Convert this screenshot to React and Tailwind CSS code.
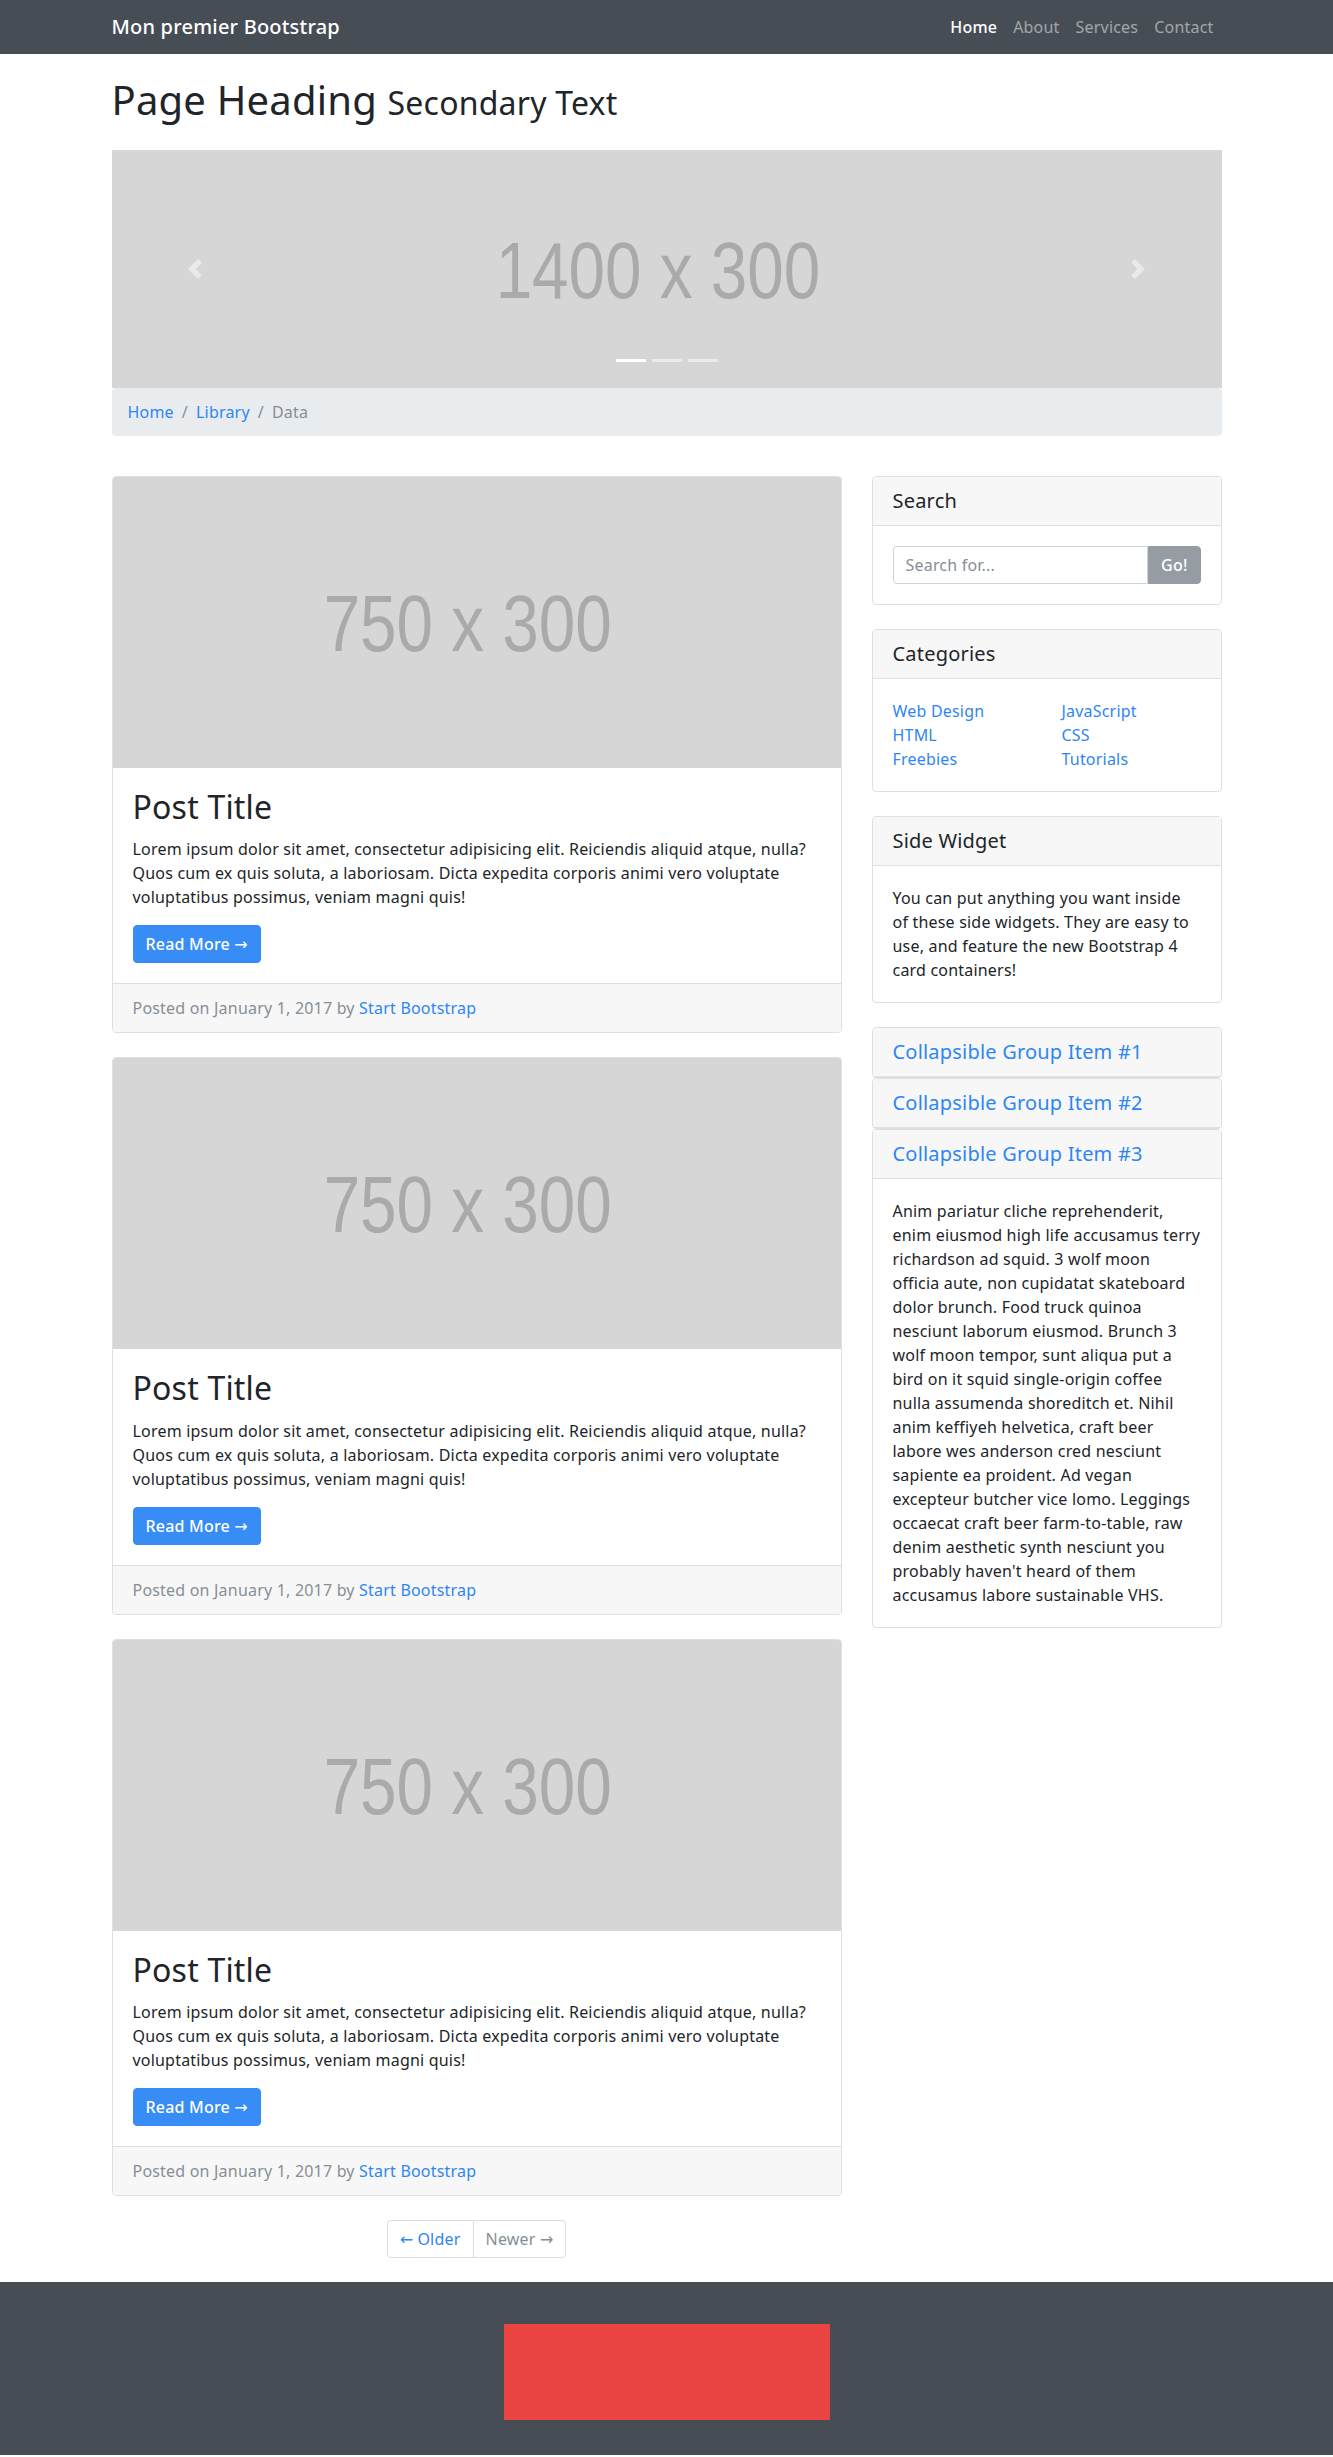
import React from 'react';

const navLinks = ['Home', 'About', 'Services', 'Contact'];

const categories = [
  ['Web Design', 'HTML', 'Freebies'],
  ['JavaScript', 'CSS', 'Tutorials'],
];

const widgetLines = [
  'You can put anything you want inside',
  'of these side widgets. They are easy to',
  'use, and feature the new Bootstrap 4',
  'card containers!',
];

const accordionLines = [
  'Anim pariatur cliche reprehenderit,',
  'enim eiusmod high life accusamus terry',
  'richardson ad squid. 3 wolf moon',
  'officia aute, non cupidatat skateboard',
  'dolor brunch. Food truck quinoa',
  'nesciunt laborum eiusmod. Brunch 3',
  'wolf moon tempor, sunt aliqua put a',
  'bird on it squid single-origin coffee',
  'nulla assumenda shoreditch et. Nihil',
  'anim keffiyeh helvetica, craft beer',
  'labore wes anderson cred nesciunt',
  'sapiente ea proident. Ad vegan',
  'excepteur butcher vice lomo. Leggings',
  'occaecat craft beer farm-to-table, raw',
  'denim aesthetic synth nesciunt you',
  "probably haven't heard of them",
  'accusamus labore sustainable VHS.',
];

// arrows look bigger in the original, DejaVu has a wider one
const Arrow = ({ left }) => (
  <span className="font-['DejaVu_Sans',sans-serif] leading-none tracking-normal">{left ? '\u2190' : '\u2192'}</span>
);

const Placeholder = ({ label, className }) => (
  <div className={`flex items-center justify-center bg-[#d6d6d6] ${className}`}>
    <span className="mr-[18px] mt-[3px] block scale-x-[0.82] font-['Liberation_Sans',Arial,sans-serif] text-[80px] leading-none tracking-normal text-[#aaaaaa]">
      {label}
    </span>
  </div>
);

const Chevron = ({ flip }) => (
  <svg width="20" height="20" viewBox="0 0 8 8" fill="#fff" className={flip ? 'rotate-180' : ''}>
    <path d="M5.25 0l-4 4 4 4 1.5-1.5-2.5-2.5 2.5-2.5-1.5-1.5z" />
  </svg>
);

const SideCard = ({ title, children }) => (
  <div className="mb-6 rounded-[4px] border border-[#dfdfdf]">
    <h5 className="rounded-t-[3px] border-b border-[#dfdfdf] bg-[#f7f7f7] px-5 py-3 text-[20px] leading-6">{title}</h5>
    <div className="p-5">{children}</div>
  </div>
);

const Post = () => (
  <div className="mb-6 overflow-hidden rounded-[4px] border border-[#dfdfdf]">
    <Placeholder label="750 x 300" className="h-[291px]" />
    <div className="p-5">
      <h2 className="mb-[11px] text-[32px] leading-[1.2]">Post Title</h2>
      <p className="mb-4">
        Lorem ipsum dolor sit amet, consectetur adipisicing elit. Reiciendis aliquid atque, nulla? Quos cum ex quis
        soluta, a laboriosam. Dicta expedita corporis animi vero voluptate voluptatibus possimus, veniam magni quis!
      </p>
      <a href="#" className="inline-block rounded-[4px] border border-[#378cf6] bg-[#378cf6] px-3 py-1.5 font-medium text-white">
        Read More <Arrow />
      </a>
    </div>
    <div className="border-t border-[#dfdfdf] bg-[#f7f7f7] px-5 py-3 text-[#868e96]">
      Posted on January 1, 2017 by{' '}
      <a href="#" className="text-[#2e86f5]">
        Start Bootstrap
      </a>
    </div>
  </div>
);

export default function App() {
  return (
    <div className="min-h-screen bg-white font-['Noto_Sans',sans-serif] text-[16px] leading-6 tracking-[0.2px] text-[#212529]">
      <nav className="bg-[#474d55]">
        <div className="mx-auto flex h-[54px] max-w-[1140px] items-center justify-between px-[15px]">
          <a href="#" className="text-[20px] font-medium text-white">
            Mon premier Bootstrap
          </a>
          <ul className="flex">
            {navLinks.map((link, i) => (
              <li key={link}>
                <a href="#" className={`block px-2 ${i === 0 ? 'font-medium text-white' : 'text-white/50'}`}>
                  {link}
                </a>
              </li>
            ))}
          </ul>
        </div>
      </nav>

      <div className="mx-auto max-w-[1140px] px-[15px]">
        <h1 className="mb-[26px] mt-[22px] text-[40px] leading-[1.2]">
          Page Heading <small className="text-[32px]">Secondary Text</small>
        </h1>

        <div className="relative">
          <Placeholder label="1400 x 300" className="h-[238px]" />
          <div className="absolute inset-y-0 left-0 flex w-[15%] items-center justify-center opacity-50">
            <Chevron />
          </div>
          <div className="absolute inset-y-0 right-0 flex w-[15%] items-center justify-center opacity-50">
            <Chevron flip />
          </div>
          <div className="absolute bottom-[26px] left-0 right-0 flex justify-center gap-[6px]">
            <span className="h-[3px] w-[30px] bg-white" />
            <span className="h-[3px] w-[30px] bg-white/50" />
            <span className="h-[3px] w-[30px] bg-white/50" />
          </div>
        </div>

        <ol className="mb-10 flex rounded-[4px] bg-[#e9ecef] px-4 py-3">
          <li>
            <a href="#" className="text-[#2e86f5]">Home</a>
          </li>
          <li className="px-2 text-[#868e96]">/</li>
          <li>
            <a href="#" className="text-[#2e86f5]">Library</a>
          </li>
          <li className="px-2 text-[#868e96]">/</li>
          <li className="text-[#868e96]">Data</li>
        </ol>

        <div className="grid grid-cols-[730px_350px] gap-x-[30px]">
          <div>
            <Post />
            <Post />
            <Post />

            <ul className="mb-6 flex justify-center">
              <li>
                <a href="#" className="block rounded-l-[4px] border border-[#dddddd] px-3 py-2 leading-5 text-[#2e86f5]">
                  <Arrow left /> Older
                </a>
              </li>
              <li>
                <span className="-ml-px block rounded-r-[4px] border border-[#dddddd] px-3 py-2 leading-5 text-[#868e96]">
                  Newer <Arrow />
                </span>
              </li>
            </ul>
          </div>

          <div>
            <SideCard title="Search">
              <div className="flex">
                <input
                  type="text"
                  placeholder="Search for..."
                  className="h-[38px] min-w-0 flex-1 rounded-l-[4px] border border-[#ced4da] px-3 outline-none placeholder:text-[#868e96]"
                />
                <button className="h-[38px] rounded-r-[4px] border border-[#969ca3] bg-[#969ca3] px-3 font-medium text-white">Go!</button>
              </div>
            </SideCard>

            <SideCard title="Categories">
              <div className="grid grid-cols-2 gap-x-[30px]">
                {categories.map((col) => (
                  <ul key={col[0]}>
                    {col.map((c) => (
                      <li key={c}>
                        <a href="#" className="text-[#2e86f5]">{c}</a>
                      </li>
                    ))}
                  </ul>
                ))}
              </div>
            </SideCard>

            <SideCard title="Side Widget">
              <p className="whitespace-nowrap">
                {widgetLines.map((line) => (
                  <span key={line} className="block">{line}</span>
                ))}
              </p>
            </SideCard>

            <div className="mb-6">
              {['#1', '#2', '#3'].map((n, i) => (
                <div key={n} className="rounded-[4px] border border-[#dfdfdf]">
                  <h5 className="rounded-t-[3px] border-b border-[#dfdfdf] bg-[#f7f7f7] px-5 py-3 text-[20px] leading-6">
                    <a href="#" className="text-[#2e86f5]">Collapsible Group Item {n}</a>
                  </h5>
                  {i === 2 && (
                    <div className="whitespace-nowrap p-5">
                      {accordionLines.map((line) => (
                        <span key={line} className="block">{line}</span>
                      ))}
                    </div>
                  )}
                </div>
              ))}
            </div>
          </div>
        </div>
      </div>

      <footer className="bg-[#474d55] pb-[35px] pt-[42px]">
        <div className="mx-auto h-[96px] w-[326px] bg-[#e94342]" />
      </footer>
    </div>
  );
}
